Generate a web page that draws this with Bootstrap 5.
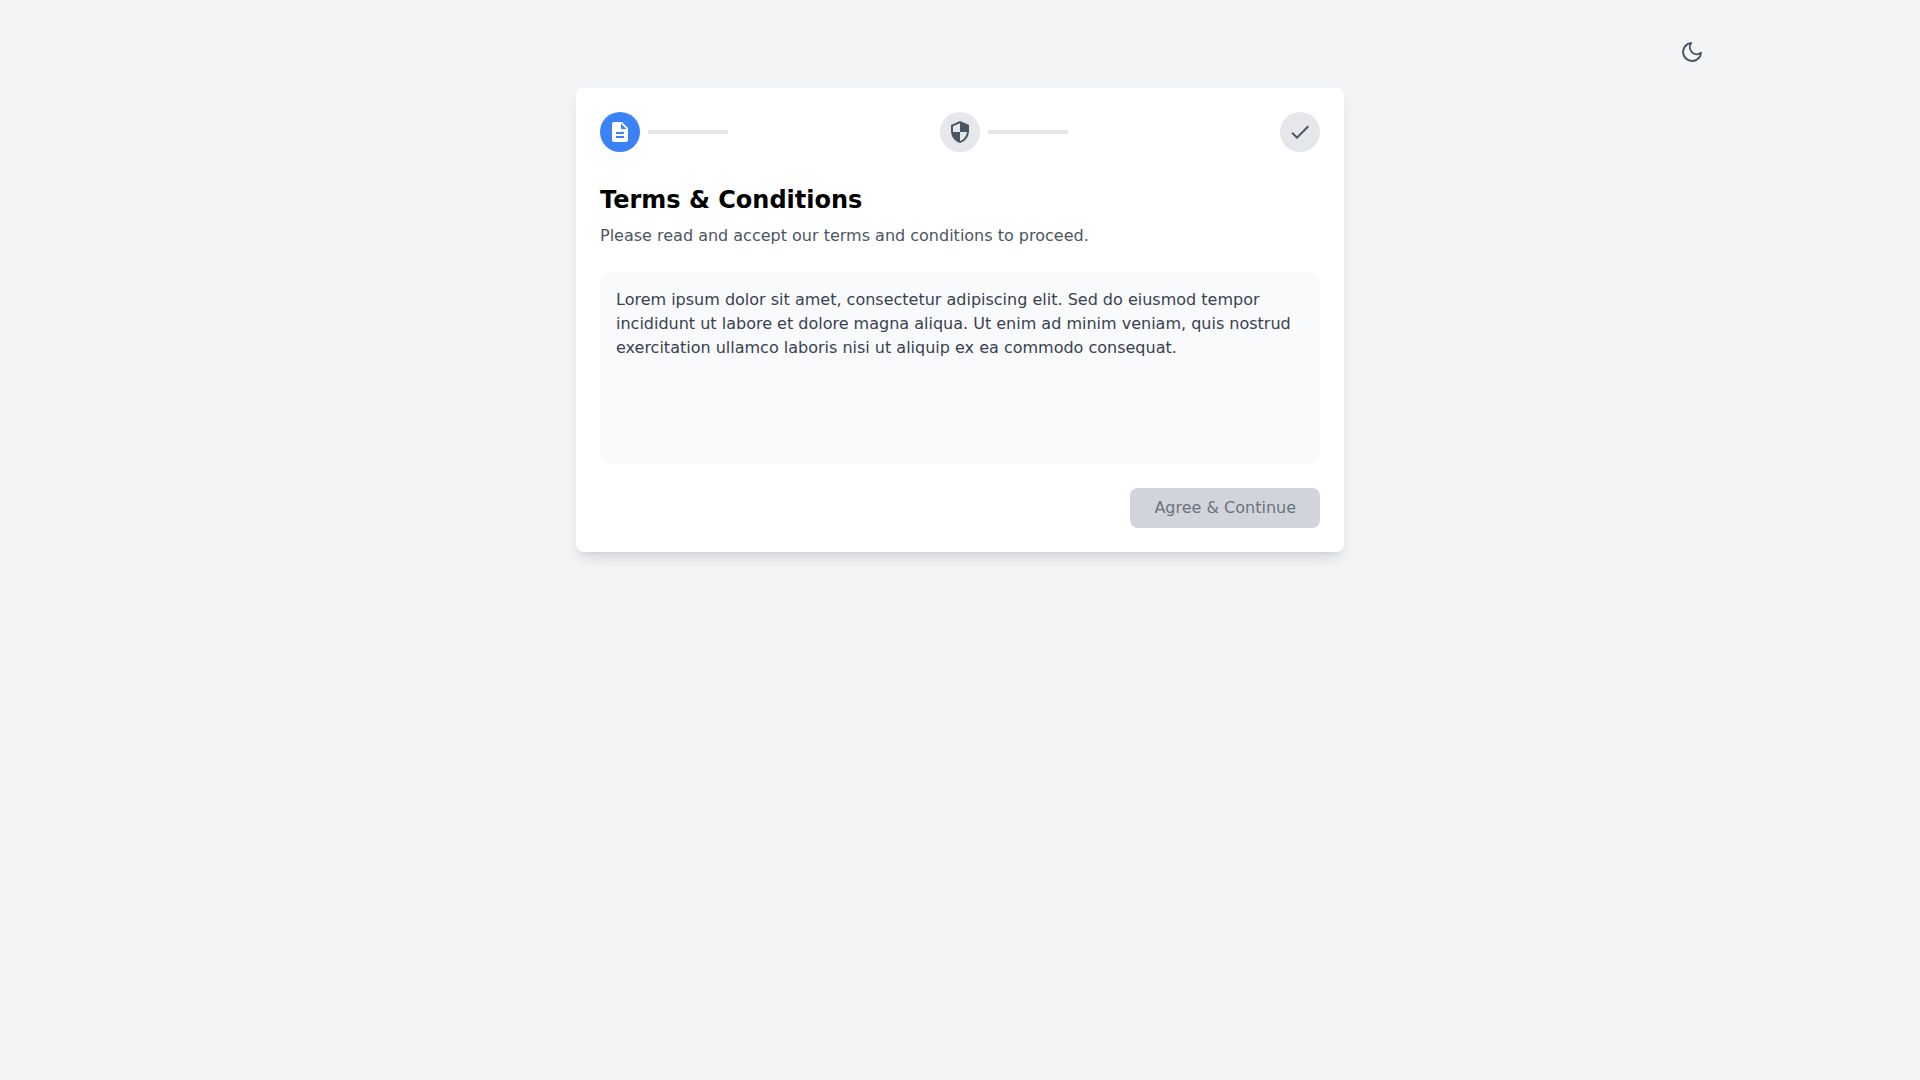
<!DOCTYPE html>
<html lang="en">
<head>
<meta charset="utf-8">
<meta name="viewport" content="width=device-width, initial-scale=1">
<title>Terms &amp; Conditions</title>
<link href="https://cdn.jsdelivr.net/npm/bootstrap@5.3.0/dist/css/bootstrap.min.css" rel="stylesheet">
<style>
  body { background: #f3f4f6; color: #000; font-family: "DejaVu Sans", sans-serif; font-size: 16px; line-height: 24px; }
  .page-shell { max-width: 1536px; padding: 32px 16px; }
  .theme-toggle { color: #4b5563; padding: 8px; border: 0; }
  .wizard { max-width: 768px; border: 0; border-radius: 8px; box-shadow: 0 10px 15px -3px rgba(0,0,0,.1), 0 4px 6px -4px rgba(0,0,0,.1); }
  .step-dot { width: 40px; height: 40px; background: #e5e7eb; color: #4b5563; }
  .step-dot.current { background: #3b82f6; color: #fff; }
  .step-line { width: 80px; height: 4px; background: #e5e7eb; }
  .wizard-steps { margin-bottom: 32px; }
  .wizard-title { font-size: 24px; line-height: 32px; }
  .wizard-intro { color: #4b5563; }
  .terms-box { height: 192px; background: #f9fafb; color: #374151; border-radius: 8px; }
  .btn-agree { --bs-btn-padding-x: 24px; --bs-btn-padding-y: 8px; --bs-btn-border-width: 0; --bs-btn-border-radius: 8px; --bs-btn-line-height: 24px; --bs-btn-disabled-bg: #d1d5db; --bs-btn-disabled-color: #6b7280; --bs-btn-disabled-opacity: 1; --bs-btn-font-family: inherit; }
</style>
</head>
<body>
<div class="container-fluid page-shell">
  <header class="d-flex justify-content-end mb-3">
    <button type="button" class="btn theme-toggle rounded-circle d-flex" aria-label="Toggle dark mode">
      <svg width="24" height="24" viewBox="0 0 24 24" fill="none" stroke="currentColor" stroke-width="2" stroke-linecap="round" stroke-linejoin="round" aria-hidden="true"><path d="M21 12.79A9 9 0 1 1 11.21 3 7 7 0 0 0 21 12.79z"/></svg>
    </button>
  </header>
  <main class="card wizard mx-auto">
    <div class="card-body p-4">
      <ol class="wizard-steps list-unstyled d-flex justify-content-between">
        <li class="d-flex align-items-center gap-2">
          <span class="step-dot current rounded-circle d-flex align-items-center justify-content-center">
            <svg width="24" height="24" viewBox="0 0 24 24" fill="currentColor" aria-hidden="true"><path d="M14 2H6c-1.1 0-1.99.9-1.99 2L4 20c0 1.1.89 2 1.99 2H18c1.1 0 2-.9 2-2V8l-6-6zm2 16H8v-2h8v2zm0-4H8v-2h8v2zm-3-5V3.5L18.5 9H13z"/></svg>
          </span>
          <span class="step-line"></span>
        </li>
        <li class="d-flex align-items-center gap-2">
          <span class="step-dot rounded-circle d-flex align-items-center justify-content-center">
            <svg width="24" height="24" viewBox="0 0 24 24" fill="currentColor" aria-hidden="true"><path d="M12 1L3 5v6c0 5.55 3.84 10.74 9 12 5.16-1.26 9-6.45 9-12V5l-9-4zm0 10.99h7c-.53 4.12-3.28 7.79-7 8.94V12H5V6.3l7-3.11v8.8z"/></svg>
          </span>
          <span class="step-line"></span>
        </li>
        <li class="d-flex align-items-center">
          <span class="step-dot rounded-circle d-flex align-items-center justify-content-center">
            <svg width="24" height="24" viewBox="0 0 24 24" fill="currentColor" aria-hidden="true"><path d="M9 16.17L4.83 12l-1.42 1.41L9 19 21 7l-1.41-1.41z"/></svg>
          </span>
        </li>
      </ol>
      <h1 class="wizard-title fw-bold mb-2">Terms &amp; Conditions</h1>
      <p class="wizard-intro mb-4">Please read and accept our terms and conditions to proceed.</p>
      <div class="terms-box overflow-auto p-3 mb-4">
        <p class="mb-0">Lorem ipsum dolor sit amet, consectetur adipiscing elit. Sed do eiusmod tempor incididunt ut labore et dolore magna aliqua. Ut enim ad minim veniam, quis nostrud exercitation ullamco laboris nisi ut aliquip ex ea commodo consequat.</p>
      </div>
      <div class="d-flex justify-content-end">
        <button type="button" class="btn btn-agree" disabled>Agree &amp; Continue</button>
      </div>
    </div>
  </main>
</div>
<script src="https://cdn.jsdelivr.net/npm/bootstrap@5.3.0/dist/js/bootstrap.bundle.min.js"></script>
</body>
</html>
